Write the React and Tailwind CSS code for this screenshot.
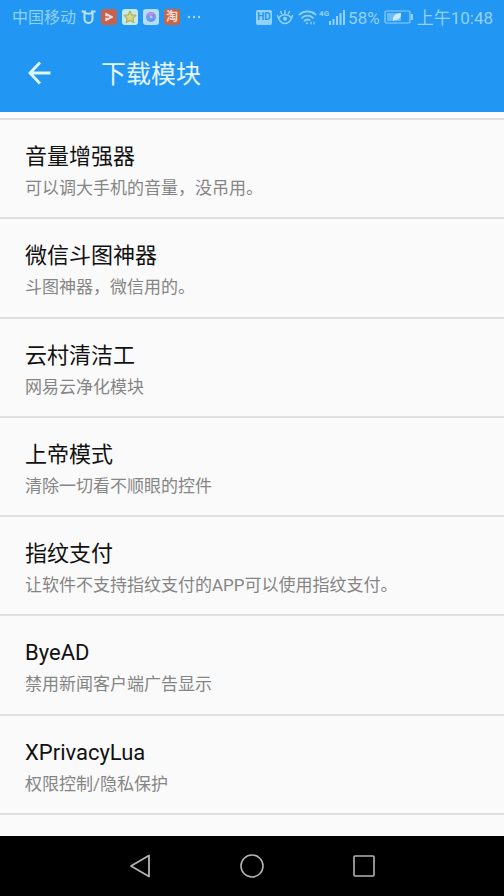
const modules = [
  { name: "音量增强器", detail: "可以调大手机的音量，没吊用。" },
  { name: "微信斗图神器", detail: "斗图神器，微信用的。" },
  { name: "云村清洁工", detail: "网易云净化模块" },
  { name: "上帝模式", detail: "清除一切看不顺眼的控件" },
  { name: "指纹支付", detail: "让软件不支持指纹支付的APP可以使用指纹支付。" },
  { name: "ByeAD", detail: "禁用新闻客户端广告显示" },
  { name: "XPrivacyLua", detail: "权限控制/隐私保护" },
];

function NotificationIcons() {
  return (
    <div className="ml-[5px] flex items-center gap-[5px]">
      <svg width="15" height="16" viewBox="0 0 15 16" fill="none" stroke="#b9e3fb" strokeWidth="2">
        <path d="M0.500 2.500H5M10 2.500h4.500" />
        <path d="M3.500 2.500v7.500a4 4 0 0 0 8 0v-7.500M3.500 3c1.500 2.400 6.500 2.400 8 0" />
      </svg>
      <svg width="16" height="16" viewBox="0 0 16 16">
        <rect width="16" height="16" rx="3" fill="#c9614f" />
        <path d="M5 4.500 11.500 8 5 11.500z" fill="#eadfe4" stroke="#eadfe4" strokeWidth="1.400" strokeLinejoin="round" />
        <path d="M4 8h4" stroke="#c9614f" strokeWidth="1.400" />
      </svg>
      <svg width="16" height="16" viewBox="0 0 16 16">
        <rect width="16" height="16" rx="3" fill="#c4eaf0" />
        <path d="m8 2 1.800 3.900 4.200.5-3.100 2.900.8 4.200L8 11.400l-3.700 2.100.8-4.200L2 6.400l4.200-.5z" fill="#d5d68c" stroke="#b3b455" strokeWidth="1.200" strokeLinejoin="round" />
      </svg>
      <svg width="16" height="16" viewBox="0 0 16 16">
        <rect width="16" height="16" rx="3" fill="#b5ddf7" />
        <circle cx="8" cy="8" r="5" fill="#7d93e4" />
        <path d="M4 6a5 5 0 0 1 7-2L8 7z" fill="#c08be0" />
        <path d="M4 10.500a5 5 0 0 0 7.500.5L8 8.500z" fill="#5a9df0" />
        <circle cx="8" cy="8" r="1.600" fill="#a8c4f5" />
      </svg>
      <span className="flex size-4 items-center justify-center rounded-[3px] bg-[#c96446] text-[12px] leading-4 font-bold text-[#f3dfd5]">淘</span>
      <svg className="ml-0.5" width="14" height="16" viewBox="0 0 14 16" fill="#a5dafa">
        <circle cx="2" cy="8" r="1.200" />
        <circle cx="7" cy="8" r="1.200" />
        <circle cx="12" cy="8" r="1.200" />
      </svg>
    </div>
  );
}

function StatusBar() {
  return (
    <div className="flex h-[34px] items-center justify-between pr-[11px] pl-3 text-[17px] leading-6 text-[#93d2fb]">
      <div className="flex items-center">
        <span className="pt-0.5 text-[16px]">中国移动</span>
        <NotificationIcons />
      </div>
      <div className="flex items-center">
        <span className="flex h-[15px] w-4 items-center justify-center rounded-[2px] bg-[#93d2fb] text-[10px] leading-none font-bold text-[#2196f3]">HD</span>
        <svg className="ml-1" width="18" height="18" viewBox="0 0 18 18" fill="none" stroke="#93d2fb" strokeWidth="1.500" strokeLinecap="round">
          <path d="M1.500 7.500C2.500 11 5 15.500 9 15.500S15.500 11 16.500 7.500M3 10C5 5.500 13 5.500 15 10" />
          <circle cx="9" cy="10.800" r="2" fill="#93d2fb" stroke="none" />
          <path d="M9 2.500v3M4.500 3.500l1 2M13.500 3.500l-1 2" />
        </svg>
        <svg className="ml-1" width="19" height="18" viewBox="0 0 19 18" fill="none" stroke="#93d2fb" strokeWidth="1.800" strokeLinecap="round">
          <path d="M1.500 6.500a12 12 0 0 1 16 0M4 9.800a8 8 0 0 1 11 0M6.500 12.800a4.500 4.500 0 0 1 5 -.8" />
          <circle cx="9" cy="15.300" r="1" fill="#93d2fb" stroke="none" />
          <path d="M13 14v2M16 14v2" strokeWidth="1.200" />
        </svg>
        <span className="mb-2 ml-0.5 text-[8px] leading-[9px] font-bold">4G</span>
        <svg width="16" height="18" viewBox="0 0 16 18" fill="#93d2fb">
          <path d="M0 13h2v4H0zM3.500 11h2v6h-2zM7 8h2v9H7zM10.500 5h2v12h-2zM14 2h2v15h-2z" />
        </svg>
        <span className="ml-[3px] pt-px">58%</span>
        <svg className="ml-1" width="29" height="16" viewBox="0 0 29 16">
          <rect x="1" y="2" width="25" height="12" rx="1.500" fill="none" stroke="#93d2fb" strokeWidth="1.200" />
          <path d="M3 4h14v8H3z" fill="#68bdf8" />
          <path d="M9 11c0-5 3-6.500 8-7 0 5-2 7-6 7l-2 1z" fill="#c9ecfd" />
          <path d="M27 5h2v6h-2z" fill="#93d2fb" />
        </svg>
        <span className="ml-1 pt-px">上午10:48</span>
      </div>
    </div>
  );
}

export default function App() {
  return (
    <div className="flex min-h-screen flex-col bg-[#fafafa] font-[Roboto,'Noto_Sans_CJK_SC',sans-serif]">
      <header className="bg-[#2196f3]">
        <StatusBar />
        <div className="flex h-[78px] items-center pl-7">
          <button type="button" aria-label="返回" className="mr-[49px]">
            <svg width="24" height="24" viewBox="0 0 24 24" fill="none" stroke="#e3f6ff" strokeWidth="2.800">
              <path d="M22.500 12H2.500M12 1.500 2 12l10 10.500" />
            </svg>
          </button>
          <h1 className="pt-1 text-[25px] leading-8 font-normal text-[#e3f5ff]">下载模块</h1>
        </div>
      </header>
      <main className="flex flex-1 flex-col pb-[21px]">
        <div className="h-2 border-b-2 border-[#e0e0e0] bg-white" />
        <ul className="flex flex-1 flex-col">
          {modules.map((item) => (
            <li key={item.name} className="flex-1 border-b-2 border-[#e0e0e0] px-[25px] pt-[22px] pb-[14px]">
              <h2 className="text-[22px] leading-[30px] font-normal text-[#111111]">{item.name}</h2>
              <p className="mt-1 text-[17px] leading-6 text-[#858585]">{item.detail}</p>
            </li>
          ))}
        </ul>
      </main>
      <nav className="flex h-[60px] items-center justify-center gap-[88px] bg-black">
        <button type="button" aria-label="后退">
          <svg width="24" height="24" viewBox="0 0 24 24" fill="none" stroke="#b4b4b4" strokeWidth="1.800" strokeLinejoin="round">
            <path d="M21 1.500v21L3 12z" />
          </svg>
        </button>
        <button type="button" aria-label="主屏幕">
          <svg width="24" height="24" viewBox="0 0 24 24" fill="none" stroke="#b4b4b4" strokeWidth="1.600">
            <circle cx="12" cy="12" r="11" />
          </svg>
        </button>
        <button type="button" aria-label="最近任务">
          <svg width="24" height="24" viewBox="0 0 24 24" fill="none" stroke="#b4b4b4" strokeWidth="1.600">
            <rect x="2" y="2" width="20" height="20" rx="1" />
          </svg>
        </button>
      </nav>
    </div>
  );
}
